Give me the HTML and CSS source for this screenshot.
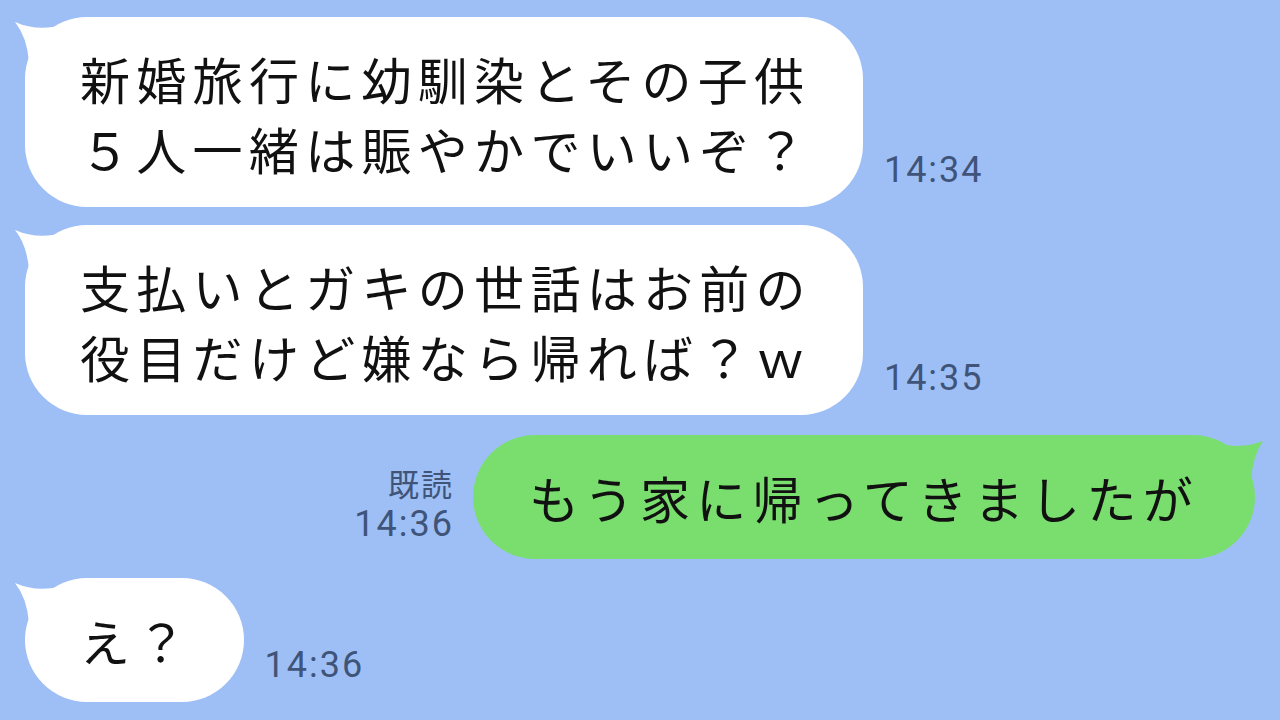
FILE: index.html
```html
<!DOCTYPE html>
<html lang="ja">
<head>
<meta charset="utf-8">
<title>chat</title>
<link rel="stylesheet" href="styles.css">
</head>
<body>
<div class="chat">
  <div class="row left r1">
    <div class="bubble white">
      <svg class="tail tail-left" width="40" height="50" viewBox="-12 0 40 50"><path d="M -10 5 Q 8 13 28 10 L 28 45 L 4 45 Q 2 20 -10 5 Z"/></svg>
      <p class="msg">新婚旅行に幼馴染とその子供<br>５人一緒は賑やかでいいぞ？</p>
    </div>
    <div class="meta"><span class="time">14:34</span></div>
  </div>
  <div class="row left r2">
    <div class="bubble white">
      <svg class="tail tail-left" width="40" height="50" viewBox="-12 0 40 50"><path d="M -10 5 Q 8 13 28 10 L 28 45 L 4 45 Q 2 20 -10 5 Z"/></svg>
      <p class="msg">支払いとガキの世話はお前の<br>役目だけど嫌なら帰れば？ｗ</p>
    </div>
    <div class="meta"><span class="time">14:35</span></div>
  </div>
  <div class="row right r3">
    <div class="meta meta-right"><span class="read">既読</span><span class="time">14:36</span></div>
    <div class="bubble green single">
      <svg class="tail tail-right" width="40" height="50" viewBox="-28 0 40 50"><path d="M 8 6 Q -10 13 -28 10 L -28 45 L -4 45 Q -2 20 8 6 Z"/></svg>
      <p class="msg">もう家に帰ってきましたが</p>
    </div>
  </div>
  <div class="row left r4">
    <div class="bubble white single">
      <svg class="tail tail-left" width="40" height="50" viewBox="-12 0 40 50"><path d="M -10 5 Q 8 13 28 10 L 28 45 L 4 45 Q 2 20 -10 5 Z"/></svg>
      <p class="msg">え？</p>
    </div>
    <div class="meta"><span class="time">14:36</span></div>
  </div>
</div>
</body>
</html>
```
FILE: styles.css
```css
html, body {
  margin: 0;
  padding: 0;
  width: 1280px;
  height: 720px;
  overflow: hidden;
  background: #9ebff6;
}
.chat {
  display: flex;
  flex-direction: column;
  padding: 17px 25px 0 25px;
}
.row {
  display: flex;
  align-items: flex-end;
  gap: 21px;
}
.r2 { margin-top: 18px; }
.r3 { margin-top: 20px; }
.r4 { margin-top: 19px; }
.row.right {
  justify-content: flex-end;
  gap: 19px;
}
.bubble {
  position: relative;
  border-radius: 62px;
  padding: 26px 51px 24px 55px;
}
.bubble.single {
  padding-top: 27px;
  padding-bottom: 27px;
}
.bubble.green {
  background: #7ade6f;
  padding-left: 56px;
  padding-right: 56px;
}
.bubble.white { background: #ffffff; }
.tail {
  position: absolute;
  top: 0;
}
.tail-left { left: -12px; }
.tail-left path { fill: #ffffff; }
.tail-right { right: -12px; }
.tail-right path { fill: #7ade6f; }
.msg {
  position: relative;
  margin: 0;
  font-family: "Noto Sans CJK JP", "Noto Sans", sans-serif;
  font-size: 50px;
  line-height: 70px;
  letter-spacing: 6.3px;
  color: #111111;
  white-space: nowrap;
}
.meta {
  display: flex;
  flex-direction: column;
  margin-bottom: 16px;
  font-family: Roboto, "Noto Sans CJK JP", sans-serif;
  color: #3f5478;
}
.meta-right {
  align-items: flex-end;
  margin-bottom: 14px;
}
.time {
  font-size: 36px;
  line-height: 42px;
  letter-spacing: 2px;
}
.read {
  font-family: "Noto Sans CJK JP", sans-serif;
  font-size: 31px;
  line-height: 40px;
  letter-spacing: 2px;
}
```
